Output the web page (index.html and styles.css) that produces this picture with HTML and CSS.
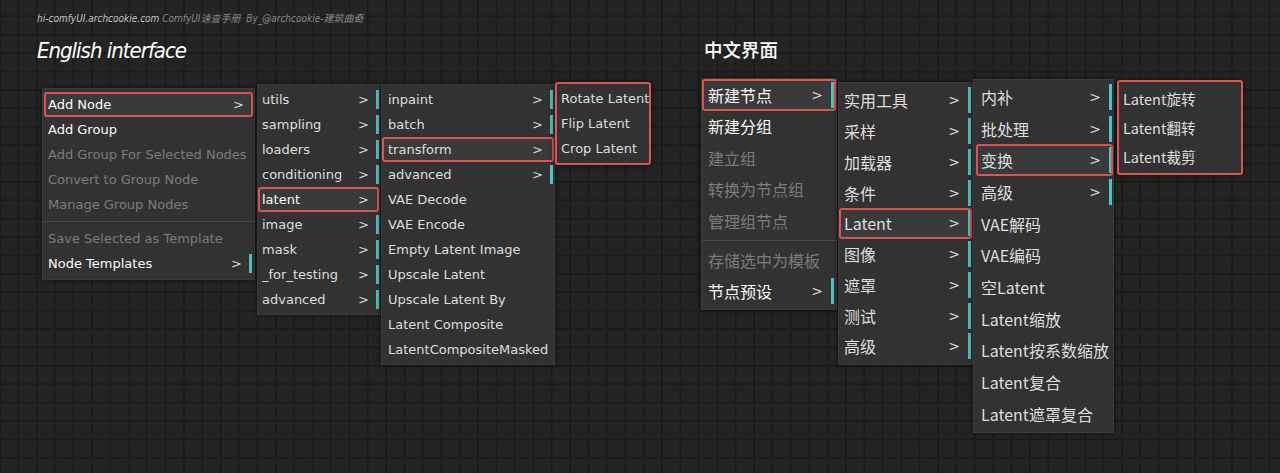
FILE: index.html
```html
<!DOCTYPE html>
<html lang="zh">
<head>
<meta charset="utf-8">
<title>ComfyUI menus</title>
<link rel="stylesheet" href="styles.css">
</head>
<body>
<div class="tagline"><span class="site">hi-comfyUI.archcookie.com</span> ComfyUI速查手册 &nbsp;By_@archcookie-建筑曲奇</div>
<div class="panels">
  <section class="panel en">
    <h1 class="title">English interface</h1>
    <div class="menus">
      <ul class="menu en-main">
        <li class="row hl"><span class="label bright">Add Node</span><span class="arrow">&gt;</span></li>
        <li class="row"><span class="label bright">Add Group</span></li>
        <li class="row off"><span class="label">Add Group For Selected Nodes</span></li>
        <li class="row off"><span class="label">Convert to Group Node</span></li>
        <li class="row off"><span class="label">Manage Group Nodes</span></li>
        <li class="sep"></li>
        <li class="row off"><span class="label">Save Selected as Template</span></li>
        <li class="row"><span class="label bright">Node Templates</span><span class="arrow">&gt;</span><span class="bar"></span></li>
      </ul>
      <ul class="menu en-sub1">
        <li class="row"><span class="label">utils</span><span class="arrow">&gt;</span><span class="bar"></span></li>
        <li class="row"><span class="label">sampling</span><span class="arrow">&gt;</span><span class="bar"></span></li>
        <li class="row"><span class="label">loaders</span><span class="arrow">&gt;</span><span class="bar"></span></li>
        <li class="row"><span class="label">conditioning</span><span class="arrow">&gt;</span><span class="bar"></span></li>
        <li class="row hl"><span class="label bright">latent</span><span class="arrow">&gt;</span><span class="bar gap"></span></li>
        <li class="row"><span class="label">image</span><span class="arrow">&gt;</span><span class="bar"></span></li>
        <li class="row"><span class="label">mask</span><span class="arrow">&gt;</span><span class="bar"></span></li>
        <li class="row"><span class="label">_for_testing</span><span class="arrow">&gt;</span><span class="bar"></span></li>
        <li class="row"><span class="label">advanced</span><span class="arrow">&gt;</span><span class="bar"></span></li>
      </ul>
      <ul class="menu en-sub2">
        <li class="row"><span class="label">inpaint</span><span class="arrow">&gt;</span><span class="bar"></span></li>
        <li class="row"><span class="label">batch</span><span class="arrow">&gt;</span><span class="bar"></span></li>
        <li class="row hl"><span class="label">transform</span><span class="arrow">&gt;</span><span class="bar gap"></span></li>
        <li class="row"><span class="label">advanced</span><span class="arrow">&gt;</span><span class="bar"></span></li>
        <li class="row"><span class="label">VAE Decode</span></li>
        <li class="row"><span class="label">VAE Encode</span></li>
        <li class="row"><span class="label">Empty Latent Image</span></li>
        <li class="row"><span class="label">Upscale Latent</span></li>
        <li class="row"><span class="label">Upscale Latent By</span></li>
        <li class="row"><span class="label">Latent Composite</span></li>
        <li class="row"><span class="label">LatentCompositeMasked</span></li>
      </ul>
      <ul class="menu en-sub3 boxed">
        <li class="row"><span class="label">Rotate Latent</span></li>
        <li class="row"><span class="label">Flip Latent</span></li>
        <li class="row"><span class="label">Crop Latent</span></li>
      </ul>
    </div>
  </section>

  <section class="panel zh">
    <h1 class="title">中文界面</h1>
    <div class="menus">
      <ul class="menu zh-main">
        <li class="row hl"><span class="label bright">新建节点</span><span class="arrow">&gt;</span><span class="bar"></span></li>
        <li class="row"><span class="label bright">新建分组</span></li>
        <li class="row off"><span class="label">建立组</span></li>
        <li class="row off"><span class="label">转换为节点组</span></li>
        <li class="row off"><span class="label">管理组节点</span></li>
        <li class="sep"></li>
        <li class="row off"><span class="label">存储选中为模板</span></li>
        <li class="row"><span class="label bright">节点预设</span><span class="arrow">&gt;</span><span class="bar"></span></li>
      </ul>
      <ul class="menu zh-sub1">
        <li class="row"><span class="label">实用工具</span><span class="arrow">&gt;</span><span class="bar"></span></li>
        <li class="row"><span class="label">采样</span><span class="arrow">&gt;</span><span class="bar"></span></li>
        <li class="row"><span class="label">加载器</span><span class="arrow">&gt;</span><span class="bar"></span></li>
        <li class="row"><span class="label">条件</span><span class="arrow">&gt;</span><span class="bar"></span></li>
        <li class="row hl"><span class="label">Latent</span><span class="arrow">&gt;</span><span class="bar"></span></li>
        <li class="row"><span class="label">图像</span><span class="arrow">&gt;</span><span class="bar"></span></li>
        <li class="row"><span class="label">遮罩</span><span class="arrow">&gt;</span><span class="bar"></span></li>
        <li class="row"><span class="label">测试</span><span class="arrow">&gt;</span><span class="bar"></span></li>
        <li class="row"><span class="label">高级</span><span class="arrow">&gt;</span><span class="bar"></span></li>
      </ul>
      <ul class="menu zh-sub2">
        <li class="row"><span class="label">内补</span><span class="arrow">&gt;</span><span class="bar"></span></li>
        <li class="row"><span class="label">批处理</span><span class="arrow">&gt;</span><span class="bar"></span></li>
        <li class="row hl"><span class="label">变换</span><span class="arrow">&gt;</span><span class="bar"></span></li>
        <li class="row"><span class="label">高级</span><span class="arrow">&gt;</span><span class="bar"></span></li>
        <li class="row"><span class="label">VAE解码</span></li>
        <li class="row"><span class="label">VAE编码</span></li>
        <li class="row"><span class="label">空Latent</span></li>
        <li class="row"><span class="label">Latent缩放</span></li>
        <li class="row"><span class="label">Latent按系数缩放</span></li>
        <li class="row"><span class="label">Latent复合</span></li>
        <li class="row"><span class="label">Latent遮罩复合</span></li>
      </ul>
      <ul class="menu zh-sub3 boxed">
        <li class="row"><span class="label">Latent旋转</span></li>
        <li class="row"><span class="label">Latent翻转</span></li>
        <li class="row"><span class="label">Latent裁剪</span></li>
      </ul>
    </div>
  </section>
</div>
</body>
</html>
```

FILE: styles.css
```css
html, body {
  margin: 0;
  padding: 0;
}

body {
  width: 1280px;
  height: 473px;
  overflow: hidden;
  background-color: #242424;
  background-image:
    linear-gradient(to right, #1b1b1b 0, #1b1b1b 2px, transparent 2px),
    linear-gradient(to bottom, #1b1b1b 0, #1b1b1b 2px, transparent 2px);
  background-size: 18.4px 18.4px;
  background-position: -1px -3px;
  font-family: "DejaVu Sans", sans-serif;
  color: #dedede;
}

.tagline {
  padding: 12px 0 0 37px;
  height: 14px;
  line-height: 14px;
  font-family: "DejaVu Sans Condensed", "DejaVu Sans", "Noto Sans CJK SC", sans-serif;
  font-stretch: condensed;
  font-style: italic;
  font-size: 10px;
  color: #8a8a8a;
  white-space: nowrap;
}

.tagline .site {
  color: #c4c4c4;
}

.panels {
  display: flex;
  margin-top: 10px;
}

.panel {
  display: flex;
  flex-direction: column;
}

.panel.en {
  width: 667px;
  padding-left: 37px;
}

.title {
  margin: 0;
  color: #fff;
  font-weight: normal;
  white-space: nowrap;
}

.en .title {
  height: 30px;
  line-height: 30px;
  font-family: "DejaVu Sans Condensed", "DejaVu Sans", sans-serif;
  font-stretch: condensed;
  font-style: italic;
  font-size: 22px;
  letter-spacing: -1px;
}

.zh .title {
  height: 26px;
  line-height: 26px;
  font-family: "Noto Sans CJK SC", sans-serif;
  font-size: 18.5px;
  font-weight: 500;
}

.menus {
  display: flex;
  align-items: flex-start;
}

.en .menus {
  margin-left: 5px;
}

.zh .menus {
  margin-left: -3px;
}

.menu {
  list-style: none;
  margin: 0;
  padding: 0;
  background: #323232;
  border: 1px solid #3b3b3b;
  box-shadow: 0 0 6px rgba(0, 0, 0, 0.6);
  box-sizing: border-box;
}

.row {
  display: flex;
  align-items: center;
  white-space: nowrap;
  box-sizing: border-box;
}

.label {
  flex: 1;
}

.bright {
  color: #fafafa;
}

.off .label {
  color: #7c7c7c;
}

.arrow {
  color: #d6d6d6;
}

.bar {
  background: #4fc3c3;
  width: 3px;
  align-self: center;
}

.bar.gap {
  visibility: hidden;
}

.hl {
  background: #3a3a3a;
  outline: 2px solid #dc5352;
  outline-offset: -2px;
  border-radius: 3px;
}

.boxed {
  border: 2px solid #dc5352;
  border-radius: 3px;
}

.sep {
  background: #4a4a4a;
  height: 1px;
}

/* English menus */
.en .menu {
  font-size: 13px;
}

.en .row {
  height: 25px;
}

.en .bar {
  height: 19px;
  margin-left: 7px;
}

.en-main {
  width: 213px;
  margin-top: 22px;
  padding: 3px 0 3px;
}

.en-main .row {
  padding: 0 2px 0 5px;
}

.en-main .row.hl {
  margin: 0 1px;
  padding: 0 9px 0 4px;
}

.en-main .sep {
  margin: 4px 0 4px;
}

.en-sub1 {
  width: 123px;
  margin-top: 18px;
  margin-left: 2px;
  padding: 2px 0;
}

.en-sub1 .row {
  padding: 0 0 0 4px;
}

.en-sub2 {
  width: 174px;
  margin-top: 18px;
  margin-left: 1px;
  padding: 2px 0;
}

.en-sub2 .row {
  padding: 0 1px 0 6px;
}

.en-sub3 {
  width: 96px;
  margin-top: 16px;
  padding: 2px 0;
}

.en-sub3 .row {
  padding: 0 0 0 4px;
}

/* Chinese menus */
.zh .menu {
  font-family: "Noto Sans CJK SC", sans-serif;
  font-size: 16px;
}

.zh .arrow {
  font-family: "DejaVu Sans", sans-serif;
  font-size: 14px;
}

.zh .bar {
  height: 26px;
  margin-left: 8px;
}

.zh-main {
  width: 136px;
  margin-top: 16px;
  padding: 0 0 2px;
}

.zh-main .row {
  height: 31.5px;
  padding: 0 2px 0 6px;
}

.zh-main .sep {
  margin: 3px 0 3.5px;
}

.zh-sub1 {
  width: 135px;
  margin-top: 20px;
  margin-left: 1px;
  padding: 2px 0;
}

.zh-sub1 .row {
  height: 30.75px;
  padding: 0 1px 0 5px;
}

.zh-sub2 {
  width: 141px;
  margin-top: 17px;
  padding: 1px 0 2px;
}

.zh-sub2 .row {
  height: 31.7px;
  padding: 0 1px 0 7px;
}

.zh-sub2 .row.hl {
  margin-left: 2px;
  padding-left: 5px;
}

.zh-sub3 {
  width: 126px;
  margin-top: 18px;
  margin-left: 3px;
  padding: 2px 0 2px;
}

.zh-sub3 .row {
  height: 29px;
  padding: 0 0 0 4px;
  font-size: 14.5px;
}
```
